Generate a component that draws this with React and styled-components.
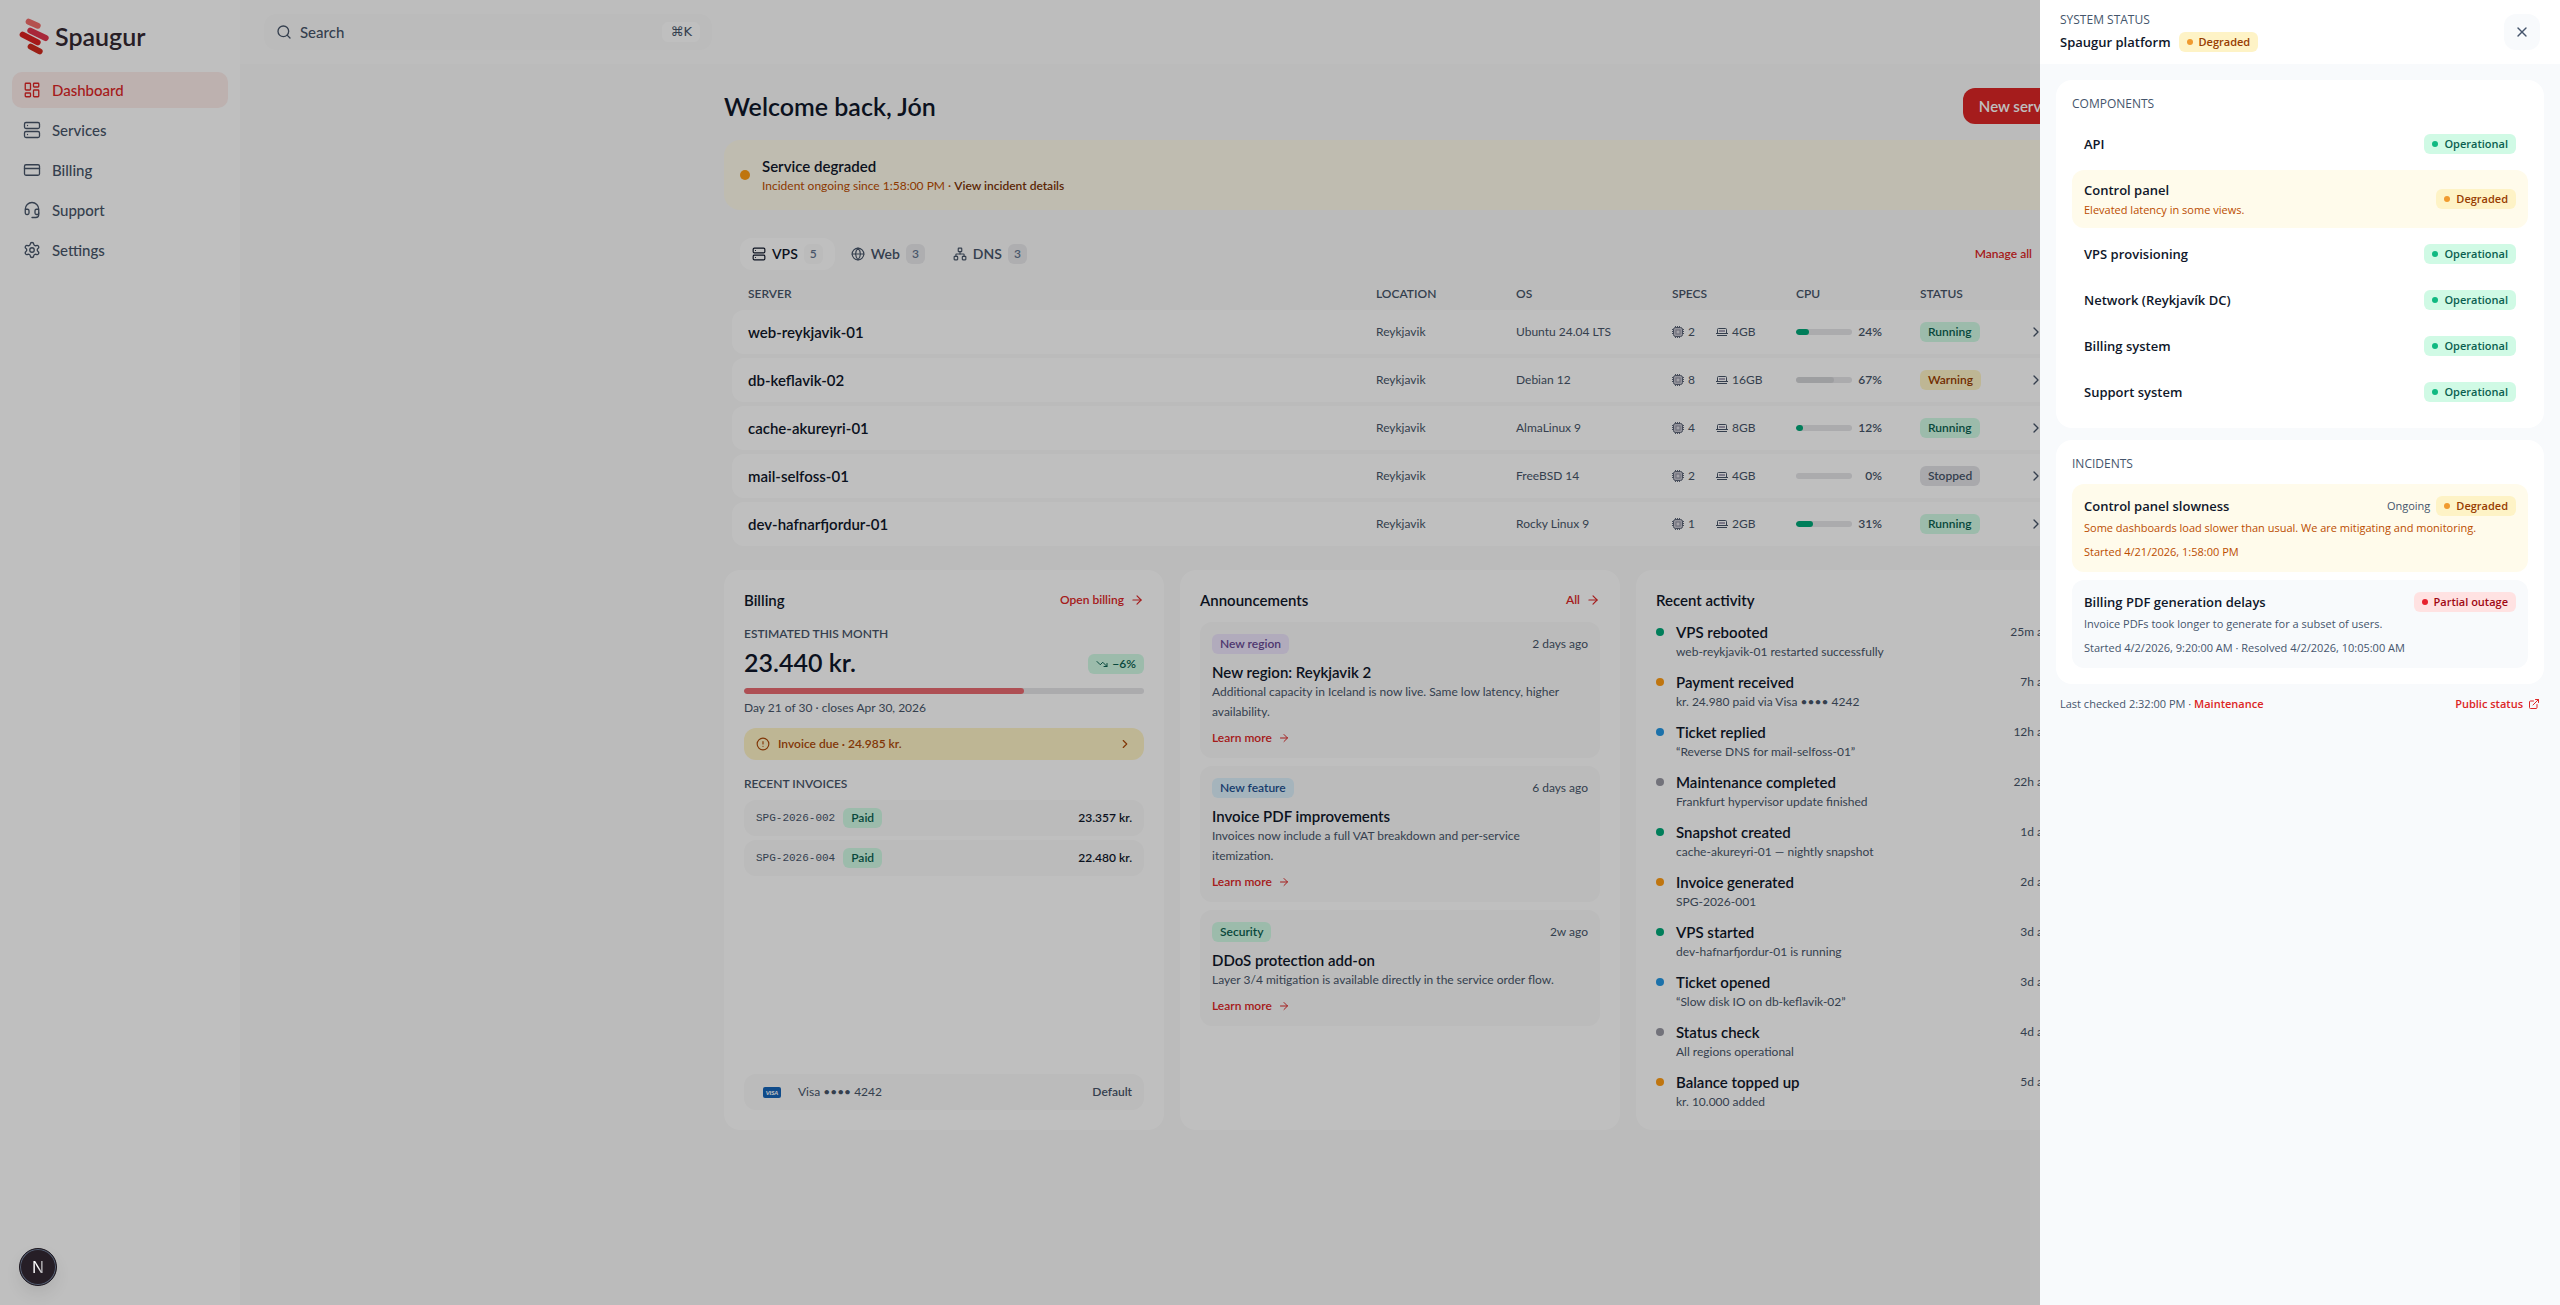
import React from 'react';
import styled, { createGlobalStyle } from 'styled-components';
import {
	ArrowRight,
	ChevronRight,
	CircleAlert,
	CreditCard,
	ExternalLink,
	Globe,
	Headset,
	LayoutDashboard,
	Network,
	Search,
	Server,
	Settings,
	TrendingDown,
	X,
} from 'lucide-react';

const GlobalStyle = createGlobalStyle`
	* {
		box-sizing: border-box;
	}

	body {
		margin: 0;
		background: #fafafa;
		color: #0f172a;
		font-family: Lato, sans-serif;
		font-size: 15px;
		line-height: 20px;
	}

	button, input {
		font: inherit;
		color: inherit;
		border: 0;
		padding: 0;
		background: none;
	}

	button {
		cursor: pointer;
	}

	h1, h2, h3, p, ul {
		margin: 0;
		padding: 0;
		list-style: none;
	}

	a {
		color: inherit;
		text-decoration: none;
	}

	svg {
		flex: none;
	}
`;

const TONES = {
	green:  { bg: '#d0fae5', text: '#0b5f50', dot: '#10b981', solid: '#00a878' },
	amber:  { bg: '#fef3c6', text: '#973c00', dot: '#f09a2e', solid: '#ff9c14' },
	red:    { bg: '#ffe2e2', text: '#9f0712', dot: '#e7222e', solid: '#dc2626' },
	gray:   { bg: '#e2e2e6', text: '#475569', dot: '#8b8b98', solid: '#9898a3' },
	violet: { bg: '#ece4fb', text: '#694a94', dot: '#8b5cf6', solid: '#8b5cf6' },
	blue:   { bg: '#dcf0fb', text: '#1e5191', dot: '#2497e3', solid: '#2497e3' },
};

const Shell = styled.div`
	display: flex;
	min-height: 100vh;
`;

const Sidebar = styled.aside`
	flex: none;
	width: 240px;
	background: #fff;
	padding: 0 12px;
`;

const Brand = styled.a`
	display: flex;
	align-items: center;
	gap: 6px;
	height: 72px;
	padding: 0 7px;
	color: #352832;
	font-size: 25px;
	line-height: 28px;
	font-weight: 600;
`;

const Nav = styled.nav`
	display: flex;
	flex-direction: column;
	gap: 4px;
`;

const NavLink = styled.a`
	display: flex;
	align-items: center;
	gap: 12px;
	height: 36px;
	padding: 0 12px;
	border-radius: 10px;
	font-weight: 500;
	color: ${ props => props.$active ? '#dc2626' : '#475569' };
	background: ${ props => props.$active ? '#fdecea' : 'transparent' };

	svg {
		margin: 0 -1px;
	}
`;

const Main = styled.div`
	flex: 1;
	min-width: 0;
`;

const Topbar = styled.header`
	display: flex;
	align-items: center;
	height: 64px;
	padding: 0 24px;
	background: #fdfdfd;
`;

const SearchBox = styled.label`
	display: flex;
	align-items: center;
	gap: 8px;
	width: 100%;
	max-width: 448px;
	height: 36px;
	padding: 0 12px;
	border-radius: 12px;
	background: #fafafa;
	color: #475569;

	input {
		flex: 1;
		min-width: 0;
		outline: 0;
	}

	input::placeholder {
		color: #475569;
		font-weight: 500;
		opacity: 1;
	}

	kbd {
		padding: 0 8px;
		border-radius: 6px;
		background: #fff;
		font-family: "DejaVu Sans", sans-serif;
		font-size: 13px;
	}
`;

const Content = styled.main`
	display: flex;
	flex-direction: column;
	gap: 16px;
	max-width: 1400px;
	margin: 0 auto;
	padding: 24px;
`;

const TitleRow = styled.div`
	display: flex;
	align-items: center;
	justify-content: space-between;

	h1 {
		font-size: 25px;
		line-height: 32px;
		font-weight: 600;
	}
`;

const PrimaryButton = styled.button`
	height: 36px;
	padding: 0 16px;
	border-radius: 12px;
	background: #dc2626;
	color: #fff;
	font-weight: 600;
`;

const Banner = styled.section`
	display: flex;
	align-items: center;
	gap: 12px;
	padding: 16px;
	border-radius: 16px;
	background: #fffbeb;

	h2 {
		font-size: 15px;
		line-height: 20px;
		font-weight: 600;
	}

	p {
		margin-top: 2px;
		font-size: 12px;
		line-height: 16px;
		color: #bb4d00;
	}

	button {
		font-weight: 600;
		color: #7b3306;
	}
`;

const Dot = styled.span`
	flex: none;
	width: ${ props => props.$size }px;
	height: ${ props => props.$size }px;
	border-radius: 50%;
	background: ${ props => TONES[ props.$tone ].solid };
`;

const Services = styled.section`
	padding: 12px 8px 4px;
`;

const TabBar = styled.div`
	display: flex;
	align-items: center;
	gap: 4px;
	padding: 0 16px 0 8px;
`;

const Tab = styled.button`
	display: flex;
	align-items: center;
	gap: 6px;
	height: 32px;
	padding: 0 12px;
	border-radius: 12px;
	font-weight: 600;
	font-size: 14px;
	color: ${ props => props.$active ? '#0f172a' : '#475569' };
	background: ${ props => props.$active ? '#fff' : 'transparent' };

	span {
		padding: 0 6px;
		border-radius: 6px;
		background: ${ props => props.$active ? '#fafafa' : '#e8e8eb' };
		color: #62748e;
		font-size: 12px;
	}
`;

const MoreLink = styled.a`
	display: inline-flex;
	align-items: center;
	gap: 6px;
	margin-left: ${ props => props.$push ? 'auto' : '0' };
	color: #dc2626;
	font-size: 12px;
	line-height: 16px;
	font-weight: 600;
`;

const ServerTable = styled.table`
	width: 100%;
	margin-top: 8px;
	table-layout: fixed;
	border-spacing: 0 4px;

	th, td {
		padding: 0;
		text-align: left;
	}

	th {
		height: 24px;
		font-size: 12px;
		line-height: 16px;
		font-weight: 600;
		color: #475569;
	}

	td {
		height: 44px;
		background: #fff;
		font-size: 12px;
		line-height: 16px;
		color: #475569;
	}

	th:first-child, td:first-child {
		padding-left: 16px;
	}

	td:first-child {
		border-radius: 12px 0 0 12px;
		font-size: 15px;
		line-height: 20px;
		font-weight: 600;
		color: #0f172a;
	}

	td:last-child {
		border-radius: 0 12px 12px 0;
	}

	td:last-child svg {
		display: block;
	}
`;

const Specs = styled.div`
	display: flex;

	span {
		display: flex;
		align-items: center;
		gap: 4px;
		width: 44px;
	}

	span + span {
		width: auto;
	}
`;

const Cpu = styled.div`
	display: flex;
	align-items: center;
	width: 86px;
	justify-content: space-between;
	font-weight: 600;
`;

const Track = styled.div`
	width: ${ props => props.$width || '100%' };
	height: 6px;
	border-radius: 3px;
	background: #e4e4e7;
	overflow: hidden;
`;

const Fill = styled.div`
	height: 100%;
	border-radius: 3px;
	background: ${ props => props.$color };
`;

const Tag = styled.span`
	display: inline-flex;
	align-items: center;
	gap: ${ props => props.$gap || 4 }px;
	height: 20px;
	padding: 0 8px;
	border-radius: 6px;
	background: ${ props => TONES[ props.$tone ].bg };
	color: ${ props => TONES[ props.$tone ].text };
	font-size: ${ props => props.$compact ? 11 : 12 }px;
	line-height: 16px;
	font-weight: 600;
	white-space: nowrap;
`;

const Cards = styled.div`
	display: grid;
	grid-template-columns: repeat( 3, minmax( 0, 1fr ) );
	gap: 16px;
`;

const Card = styled.section`
	display: flex;
	flex-direction: column;
	padding: 20px;
	border-radius: 16px;
	background: #fff;
`;

const CardHeader = styled.header`
	display: flex;
	align-items: center;
	justify-content: space-between;
	margin-bottom: 12px;

	h2 {
		font-size: 15px;
		line-height: 20px;
		font-weight: 600;
	}
`;

const Overline = styled.h3`
	margin: 4px 0;
	font-size: 12px;
	line-height: 16px;
	font-weight: 600;
	color: #475569;
`;

const Estimate = styled.div`
	display: flex;
	align-items: flex-end;
	justify-content: space-between;
	margin-bottom: 10px;

	strong {
		font-size: 25px;
		line-height: 32px;
		font-weight: 600;
	}

	span {
		margin-bottom: 4px;
	}
`;

const Period = styled.p`
	margin: 6px 0 12px;
	font-size: 12px;
	line-height: 16px;
	color: #475569;
`;

const DueRow = styled.a`
	display: flex;
	align-items: center;
	gap: 8px;
	height: 32px;
	margin-bottom: 12px;
	padding: 0 12px;
	border-radius: 12px;
	background: #fef3c6;
	color: #ad4a0a;
	font-size: 12px;
	font-weight: 600;

	svg:last-child {
		margin-left: auto;
	}
`;

const InvoiceList = styled.ul`
	display: flex;
	flex-direction: column;
	gap: 4px;
	margin: 4px 0 auto;
`;

const SoftRow = styled.div`
	display: flex;
	align-items: center;
	gap: 8px;
	height: 36px;
	padding: 0 12px;
	border-radius: 12px;
	background: #fafafa;
	font-size: 12px;
	line-height: 16px;
	color: #475569;

	code {
		font-family: "Liberation Mono", monospace;
		font-size: 11px;
	}

	strong {
		margin-left: auto;
		font-weight: 600;
		color: ${ props => props.$muted ? '#475569' : '#0f172a' };
	}
`;

const CardBrand = styled.span`
	display: flex;
	justify-content: center;
	width: 32px;
	margin-right: 2px;
`;

const NewsList = styled.ul`
	display: flex;
	flex-direction: column;
	gap: 8px;
`;

const NewsItem = styled.li`
	padding: 12px;
	border-radius: 12px;
	background: #fafafa;
	font-size: 12px;
	line-height: 20px;
	color: #475569;

	header {
		display: flex;
		align-items: center;
		justify-content: space-between;
		height: 20px;
	}

	h3 {
		margin-top: 8px;
		font-size: 15px;
		line-height: 20px;
		font-weight: 600;
		color: #0f172a;
	}

	p {
		margin-bottom: 8px;
		padding-right: 8px;
	}

	${ MoreLink } {
		display: flex;
	}
`;

const ActivityList = styled.ul`
	display: flex;
	flex-direction: column;
	gap: 12px;
`;

const ActivityItem = styled.li`
	display: grid;
	grid-template-columns: 8px 1fr auto;
	gap: 2px 12px;
	align-items: center;
	font-size: 12px;
	line-height: 16px;
	color: #475569;

	h3 {
		font-size: 15px;
		line-height: 20px;
		font-weight: 600;
		color: #0f172a;
	}

	p {
		grid-column: 2;
	}
`;

const Backdrop = styled.div`
	position: fixed;
	inset: 0;
	background: rgba( 0, 0, 0, 0.25 );
`;

const Drawer = styled.aside`
	position: fixed;
	top: 0;
	right: 0;
	bottom: 0;
	width: 520px;
	background: #f8fafc;
	font-family: "Open Sans", sans-serif;
	font-size: 11px;
	line-height: 16px;
	color: #45556c;
	overflow-y: auto;

	h2, h3 {
		font-size: 13px;
		line-height: 20px;
		font-weight: 600;
		color: #0f172a;
	}
`;

const DrawerHeader = styled.header`
	display: flex;
	align-items: center;
	justify-content: space-between;
	height: 64px;
	padding: 0 20px;
	background: #fff;

	h2 {
		display: flex;
		align-items: center;
		gap: 8px;
		margin-top: 4px;
	}
`;

const Label = styled.p`
	font-size: 12px;
	line-height: 16px;
`;

const CloseButton = styled.button`
	display: flex;
	align-items: center;
	justify-content: center;
	width: 36px;
	height: 36px;
	border-radius: 12px;
	background: #f8fafc;
	color: #45556c;
`;

const DrawerBody = styled.div`
	display: flex;
	flex-direction: column;
	gap: 12px;
	padding: 16px;
`;

const Panel = styled.section`
	padding: 16px;
	border-radius: 16px;
	background: #fff;

	ul {
		display: flex;
		flex-direction: column;
		gap: ${ props => props.$gap }px;
		margin-top: 12px;
	}
`;

const ComponentRow = styled.li`
	display: flex;
	align-items: center;
	justify-content: space-between;
	padding: 10px 12px;
	border-radius: 12px;
	background: ${ props => props.$warn ? '#fffbeb' : 'transparent' };

	p {
		margin-top: 2px;
		color: #bb4d00;
	}
`;

const Incident = styled.li`
	padding: 12px;
	border-radius: 12px;
	background: ${ props => props.$ongoing ? '#fffbeb' : '#f8fafc' };
	color: ${ props => props.$ongoing ? '#bb4d00' : '#45556c' };

	header {
		display: flex;
		align-items: center;
		gap: 6px;
		color: #45556c;
	}

	h3 {
		flex: 1;
	}

	p {
		margin-top: 4px;
	}

	p + p {
		margin-top: 8px;
	}
`;

const DrawerFooter = styled.footer`
	display: flex;
	justify-content: space-between;
	padding: 0 4px;

	a {
		display: inline-flex;
		align-items: center;
		gap: 5px;
		font-weight: 600;
		color: #dc2626;
	}
`;

const DevBadge = styled.button`
	position: fixed;
	left: 19px;
	bottom: 19px;
	width: 38px;
	height: 38px;
	border: 1px solid #1d1820;
	border-radius: 50%;
	background: #261e26;
	box-shadow: inset 0 0 0 1px #566175, 0 8px 16px rgba( 0, 0, 0, 0.08 );
	font-family: Inter, sans-serif;
	font-size: 16px;
	line-height: 16px;

	span {
		background: linear-gradient( 90deg, #fff 50%, #8d8a90 );
		background-clip: text;
		color: transparent;
	}
`;

const NAV = [
	{ label: 'Dashboard', icon: LayoutDashboard, active: true },
	{ label: 'Services', icon: Server },
	{ label: 'Billing', icon: CreditCard },
	{ label: 'Support', icon: Headset },
	{ label: 'Settings', icon: Settings },
];

const TABS = [
	{ label: 'VPS', icon: Server, count: 5, active: true },
	{ label: 'Web', icon: Globe, count: 3 },
	{ label: 'DNS', icon: Network, count: 3 },
];

const SERVERS = [
	{ name: 'web-reykjavik-01', os: 'Ubuntu 24.04 LTS', cores: 2, ram: '4GB', cpu: 24, status: 'Running', tone: 'green' },
	{ name: 'db-keflavik-02', os: 'Debian 12', cores: 8, ram: '16GB', cpu: 67, status: 'Warning', tone: 'amber' },
	{ name: 'cache-akureyri-01', os: 'AlmaLinux 9', cores: 4, ram: '8GB', cpu: 12, status: 'Running', tone: 'green' },
	{ name: 'mail-selfoss-01', os: 'FreeBSD 14', cores: 2, ram: '4GB', cpu: 0, status: 'Stopped', tone: 'gray' },
	{ name: 'dev-hafnarfjordur-01', os: 'Rocky Linux 9', cores: 1, ram: '2GB', cpu: 31, status: 'Running', tone: 'green' },
];

const INVOICES = [
	{ id: 'SPG-2026-002', total: '23.357 kr.' },
	{ id: 'SPG-2026-004', total: '22.480 kr.' },
];

const NEWS = [
	{
		tag: 'New region',
		tone: 'violet',
		date: '2 days ago',
		title: 'New region: Reykjavik 2',
		text: 'Additional capacity in Iceland is now live. Same low latency, higher availability.',
	},
	{
		tag: 'New feature',
		tone: 'blue',
		date: '6 days ago',
		title: 'Invoice PDF improvements',
		text: 'Invoices now include a full VAT breakdown and per-service itemization.',
	},
	{
		tag: 'Security',
		tone: 'green',
		date: '2w ago',
		title: 'DDoS protection add-on',
		text: 'Layer 3/4 mitigation is available directly in the service order flow.',
	},
];

const ACTIVITY = [
	{ tone: 'green', title: 'VPS rebooted', text: 'web-reykjavik-01 restarted successfully', time: '25m ago' },
	{ tone: 'amber', title: 'Payment received', text: 'kr. 24.980 paid via Visa •••• 4242', time: '7h ago' },
	{ tone: 'blue', title: 'Ticket replied', text: '“Reverse DNS for mail-selfoss-01”', time: '12h ago' },
	{ tone: 'gray', title: 'Maintenance completed', text: 'Frankfurt hypervisor update finished', time: '22h ago' },
	{ tone: 'green', title: 'Snapshot created', text: 'cache-akureyri-01 — nightly snapshot', time: '1d ago' },
	{ tone: 'amber', title: 'Invoice generated', text: 'SPG-2026-001', time: '2d ago' },
	{ tone: 'green', title: 'VPS started', text: 'dev-hafnarfjordur-01 is running', time: '3d ago' },
	{ tone: 'blue', title: 'Ticket opened', text: '“Slow disk IO on db-keflavik-02”', time: '3d ago' },
	{ tone: 'gray', title: 'Status check', text: 'All regions operational', time: '4d ago' },
	{ tone: 'amber', title: 'Balance topped up', text: 'kr. 10.000 added', time: '5d ago' },
];

const COMPONENTS = [
	{ name: 'API' },
	{ name: 'Control panel', note: 'Elevated latency in some views.' },
	{ name: 'VPS provisioning' },
	{ name: 'Network (Reykjavík DC)' },
	{ name: 'Billing system' },
	{ name: 'Support system' },
];

const LogoMark = () => (
	<svg width="30" height="37" viewBox="0 0 90 111" fill="none" strokeWidth="18" strokeLinecap="round" aria-hidden="true">
		<path d="M29 11 56 23" stroke="#f06c6a" />
		<path d="M34 38 80 60" stroke="#e0344c" />
		<path d="M11 50 56 73" stroke="#dc2020" />
		<path d="M35 86 62 100" stroke="#cf2a1e" />
	</svg>
);

const ChipIcon = () => (
	<svg width="12" height="12" viewBox="0 0 12 12" fill="none" stroke="#5d6577" aria-hidden="true">
		<path d="M3.5 0v12M5.5 0v12M7.5 0v12M0 3.5h12M0 5.5h12M0 7.5h12" />
		<rect x="1.5" y="1.5" width="9" height="9" rx="2" fill="#c5c4cf" />
		<rect x="4" y="4" width="4" height="4" fill="#dcdbe3" stroke="#8f90a0" />
	</svg>
);

const MemoryIcon = () => (
	<svg width="12" height="12" viewBox="0 0 12 12" fill="none" stroke="#475569" aria-hidden="true">
		<path d="M1.5 8V3.5a1 1 0 0 1 1-1h7a1 1 0 0 1 1 1V8" />
		<path d="M3 5h6" stroke="#a9a4b8" strokeWidth="2" />
		<path d="M0 7.5h12M1 9.5h10" />
	</svg>
);

const VisaIcon = () => (
	<svg width="18" height="11" viewBox="0 0 36 22" aria-hidden="true">
		<rect width="36" height="22" rx="4" fill="#1464b8" />
		<text x="18" y="15" textAnchor="middle" fill="#fff" fontFamily="Lato, sans-serif" fontSize="12" fontWeight="900" fontStyle="italic">VISA</text>
	</svg>
);

const StatusTag = ( { tone, children } ) => (
	<Tag $tone={ tone } $gap={ 6 } $compact>
		<svg width="6" height="6" aria-hidden="true">
			<circle cx="3" cy="3" r="3" fill={ TONES[ tone ].dot } />
		</svg>
		{ children }
	</Tag>
);

const SidebarNav = () => (
	<Sidebar>
		<Brand href="#">
			<LogoMark />
			Spaugur
		</Brand>
		<Nav>
			{ NAV.map( ( { label, icon: Icon, active } ) => (
				<NavLink key={ label } href="#" $active={ active }>
					<Icon size={ 18 } strokeWidth={ 1.75 } />
					{ label }
				</NavLink>
			) ) }
		</Nav>
	</Sidebar>
);

const ServerList = () => (
	<Services>
		<TabBar>
			{ TABS.map( ( { label, icon: Icon, count, active } ) => (
				<Tab key={ label } type="button" $active={ active }>
					<Icon size={ 14 } />
					{ label }
					<span>{ count }</span>
				</Tab>
			) ) }
			<MoreLink href="#" $push>
				Manage all
				<ArrowRight size={ 14 } />
			</MoreLink>
		</TabBar>
		<ServerTable>
			<colgroup>
				<col />
				<col width="140" />
				<col width="156" />
				<col width="124" />
				<col width="124" />
				<col width="108" />
				<col width="40" />
			</colgroup>
			<thead>
				<tr>
					<th>SERVER</th>
					<th>LOCATION</th>
					<th>OS</th>
					<th>SPECS</th>
					<th>CPU</th>
					<th>STATUS</th>
					<th aria-label="Open" />
				</tr>
			</thead>
			<tbody>
				{ SERVERS.map( server => (
					<tr key={ server.name }>
						<td>{ server.name }</td>
						<td>Reykjavik</td>
						<td>{ server.os }</td>
						<td>
							<Specs>
								<span><ChipIcon />{ server.cores }</span>
								<span><MemoryIcon />{ server.ram }</span>
							</Specs>
						</td>
						<td>
							<Cpu>
								<Track $width="56px">
									<Fill $color={ server.tone === 'amber' ? '#d2d3d6' : '#00a878' } style={ { width: `${ server.cpu }%` } } />
								</Track>
								{ server.cpu }%
							</Cpu>
						</td>
						<td><Tag $tone={ server.tone }>{ server.status }</Tag></td>
						<td><ChevronRight size={ 16 } /></td>
					</tr>
				) ) }
			</tbody>
		</ServerTable>
	</Services>
);

const BillingCard = () => (
	<Card>
		<CardHeader>
			<h2>Billing</h2>
			<MoreLink href="#">
				Open billing
				<ArrowRight size={ 14 } />
			</MoreLink>
		</CardHeader>
		<Overline>ESTIMATED THIS MONTH</Overline>
		<Estimate>
			<strong>23.440 kr.</strong>
			<Tag $tone="green">
				<TrendingDown size={ 12 } />
				−6%
			</Tag>
		</Estimate>
		<Track>
			<Fill $color="#e96a70" style={ { width: `${ 21 / 30 * 100 }%` } } />
		</Track>
		<Period>Day 21 of 30 · closes Apr 30, 2026</Period>
		<DueRow href="#">
			<CircleAlert size={ 14 } />
			Invoice due · 24.985 kr.
			<ChevronRight size={ 14 } />
		</DueRow>
		<Overline>RECENT INVOICES</Overline>
		<InvoiceList>
			{ INVOICES.map( invoice => (
				<SoftRow as="li" key={ invoice.id }>
					<code>{ invoice.id }</code>
					<Tag $tone="green">Paid</Tag>
					<strong>{ invoice.total }</strong>
				</SoftRow>
			) ) }
		</InvoiceList>
		<SoftRow $muted>
			<CardBrand><VisaIcon /></CardBrand>
			Visa •••• 4242
			<strong>Default</strong>
		</SoftRow>
	</Card>
);

const NewsCard = () => (
	<Card>
		<CardHeader>
			<h2>Announcements</h2>
			<MoreLink href="#">
				All
				<ArrowRight size={ 14 } />
			</MoreLink>
		</CardHeader>
		<NewsList>
			{ NEWS.map( item => (
				<NewsItem key={ item.title }>
					<header>
						<Tag $tone={ item.tone }>{ item.tag }</Tag>
						<time>{ item.date }</time>
					</header>
					<h3>{ item.title }</h3>
					<p>{ item.text }</p>
					<MoreLink href="#">
						Learn more
						<ArrowRight size={ 12 } />
					</MoreLink>
				</NewsItem>
			) ) }
		</NewsList>
	</Card>
);

const ActivityCard = () => (
	<Card>
		<CardHeader>
			<h2>Recent activity</h2>
		</CardHeader>
		<ActivityList>
			{ ACTIVITY.map( item => (
				<ActivityItem key={ item.title }>
					<Dot $size={ 8 } $tone={ item.tone } />
					<h3>{ item.title }</h3>
					<time>{ item.time }</time>
					<p>{ item.text }</p>
				</ActivityItem>
			) ) }
		</ActivityList>
	</Card>
);

const StatusDrawer = () => (
	<Drawer role="dialog" aria-label="System status">
		<DrawerHeader>
			<div>
				<Label>SYSTEM STATUS</Label>
				<h2>
					Spaugur platform
					<StatusTag tone="amber">Degraded</StatusTag>
				</h2>
			</div>
			<CloseButton type="button" aria-label="Close">
				<X size={ 16 } />
			</CloseButton>
		</DrawerHeader>
		<DrawerBody>
			<Panel $gap={ 6 }>
				<Label>COMPONENTS</Label>
				<ul>
					{ COMPONENTS.map( ( { name, note } ) => (
						<ComponentRow key={ name } $warn={ !! note }>
							<div>
								<h3>{ name }</h3>
								{ note && <p>{ note }</p> }
							</div>
							<StatusTag tone={ note ? 'amber' : 'green' }>{ note ? 'Degraded' : 'Operational' }</StatusTag>
						</ComponentRow>
					) ) }
				</ul>
			</Panel>
			<Panel $gap={ 8 }>
				<Label>INCIDENTS</Label>
				<ul>
					<Incident $ongoing>
						<header>
							<h3>Control panel slowness</h3>
							<span>Ongoing</span>
							<StatusTag tone="amber">Degraded</StatusTag>
						</header>
						<p>Some dashboards load slower than usual. We are mitigating and monitoring.</p>
						<p>Started 4/21/2026, 1:58:00 PM</p>
					</Incident>
					<Incident>
						<header>
							<h3>Billing PDF generation delays</h3>
							<StatusTag tone="red">Partial outage</StatusTag>
						</header>
						<p>Invoice PDFs took longer to generate for a subset of users.</p>
						<p>Started 4/2/2026, 9:20:00 AM · Resolved 4/2/2026, 10:05:00 AM</p>
					</Incident>
				</ul>
			</Panel>
			<DrawerFooter>
				<span>Last checked 2:32:00 PM · <a href="#">Maintenance</a></span>
				<a href="#">
					Public status
					<ExternalLink size={ 12 } />
				</a>
			</DrawerFooter>
		</DrawerBody>
	</Drawer>
);

const App = () => (
	<>
		<GlobalStyle />
		<Shell>
			<SidebarNav />
			<Main>
				<Topbar>
					<SearchBox>
						<Search size={ 16 } />
						<input type="text" placeholder="Search" aria-label="Search" />
						<kbd>⌘K</kbd>
					</SearchBox>
				</Topbar>
				<Content>
					<TitleRow>
						<h1>Welcome back, Jón</h1>
						<PrimaryButton type="button">New service</PrimaryButton>
					</TitleRow>
					<Banner>
						<Dot $size={ 10 } $tone="amber" />
						<div>
							<h2>Service degraded</h2>
							<p>Incident ongoing since 1:58:00 PM · <button type="button">View incident details</button></p>
						</div>
					</Banner>
					<ServerList />
					<Cards>
						<BillingCard />
						<NewsCard />
						<ActivityCard />
					</Cards>
				</Content>
			</Main>
		</Shell>
		<Backdrop />
		<StatusDrawer />
		<DevBadge type="button" aria-label="Developer tools"><span>N</span></DevBadge>
	</>
);

export default App;
